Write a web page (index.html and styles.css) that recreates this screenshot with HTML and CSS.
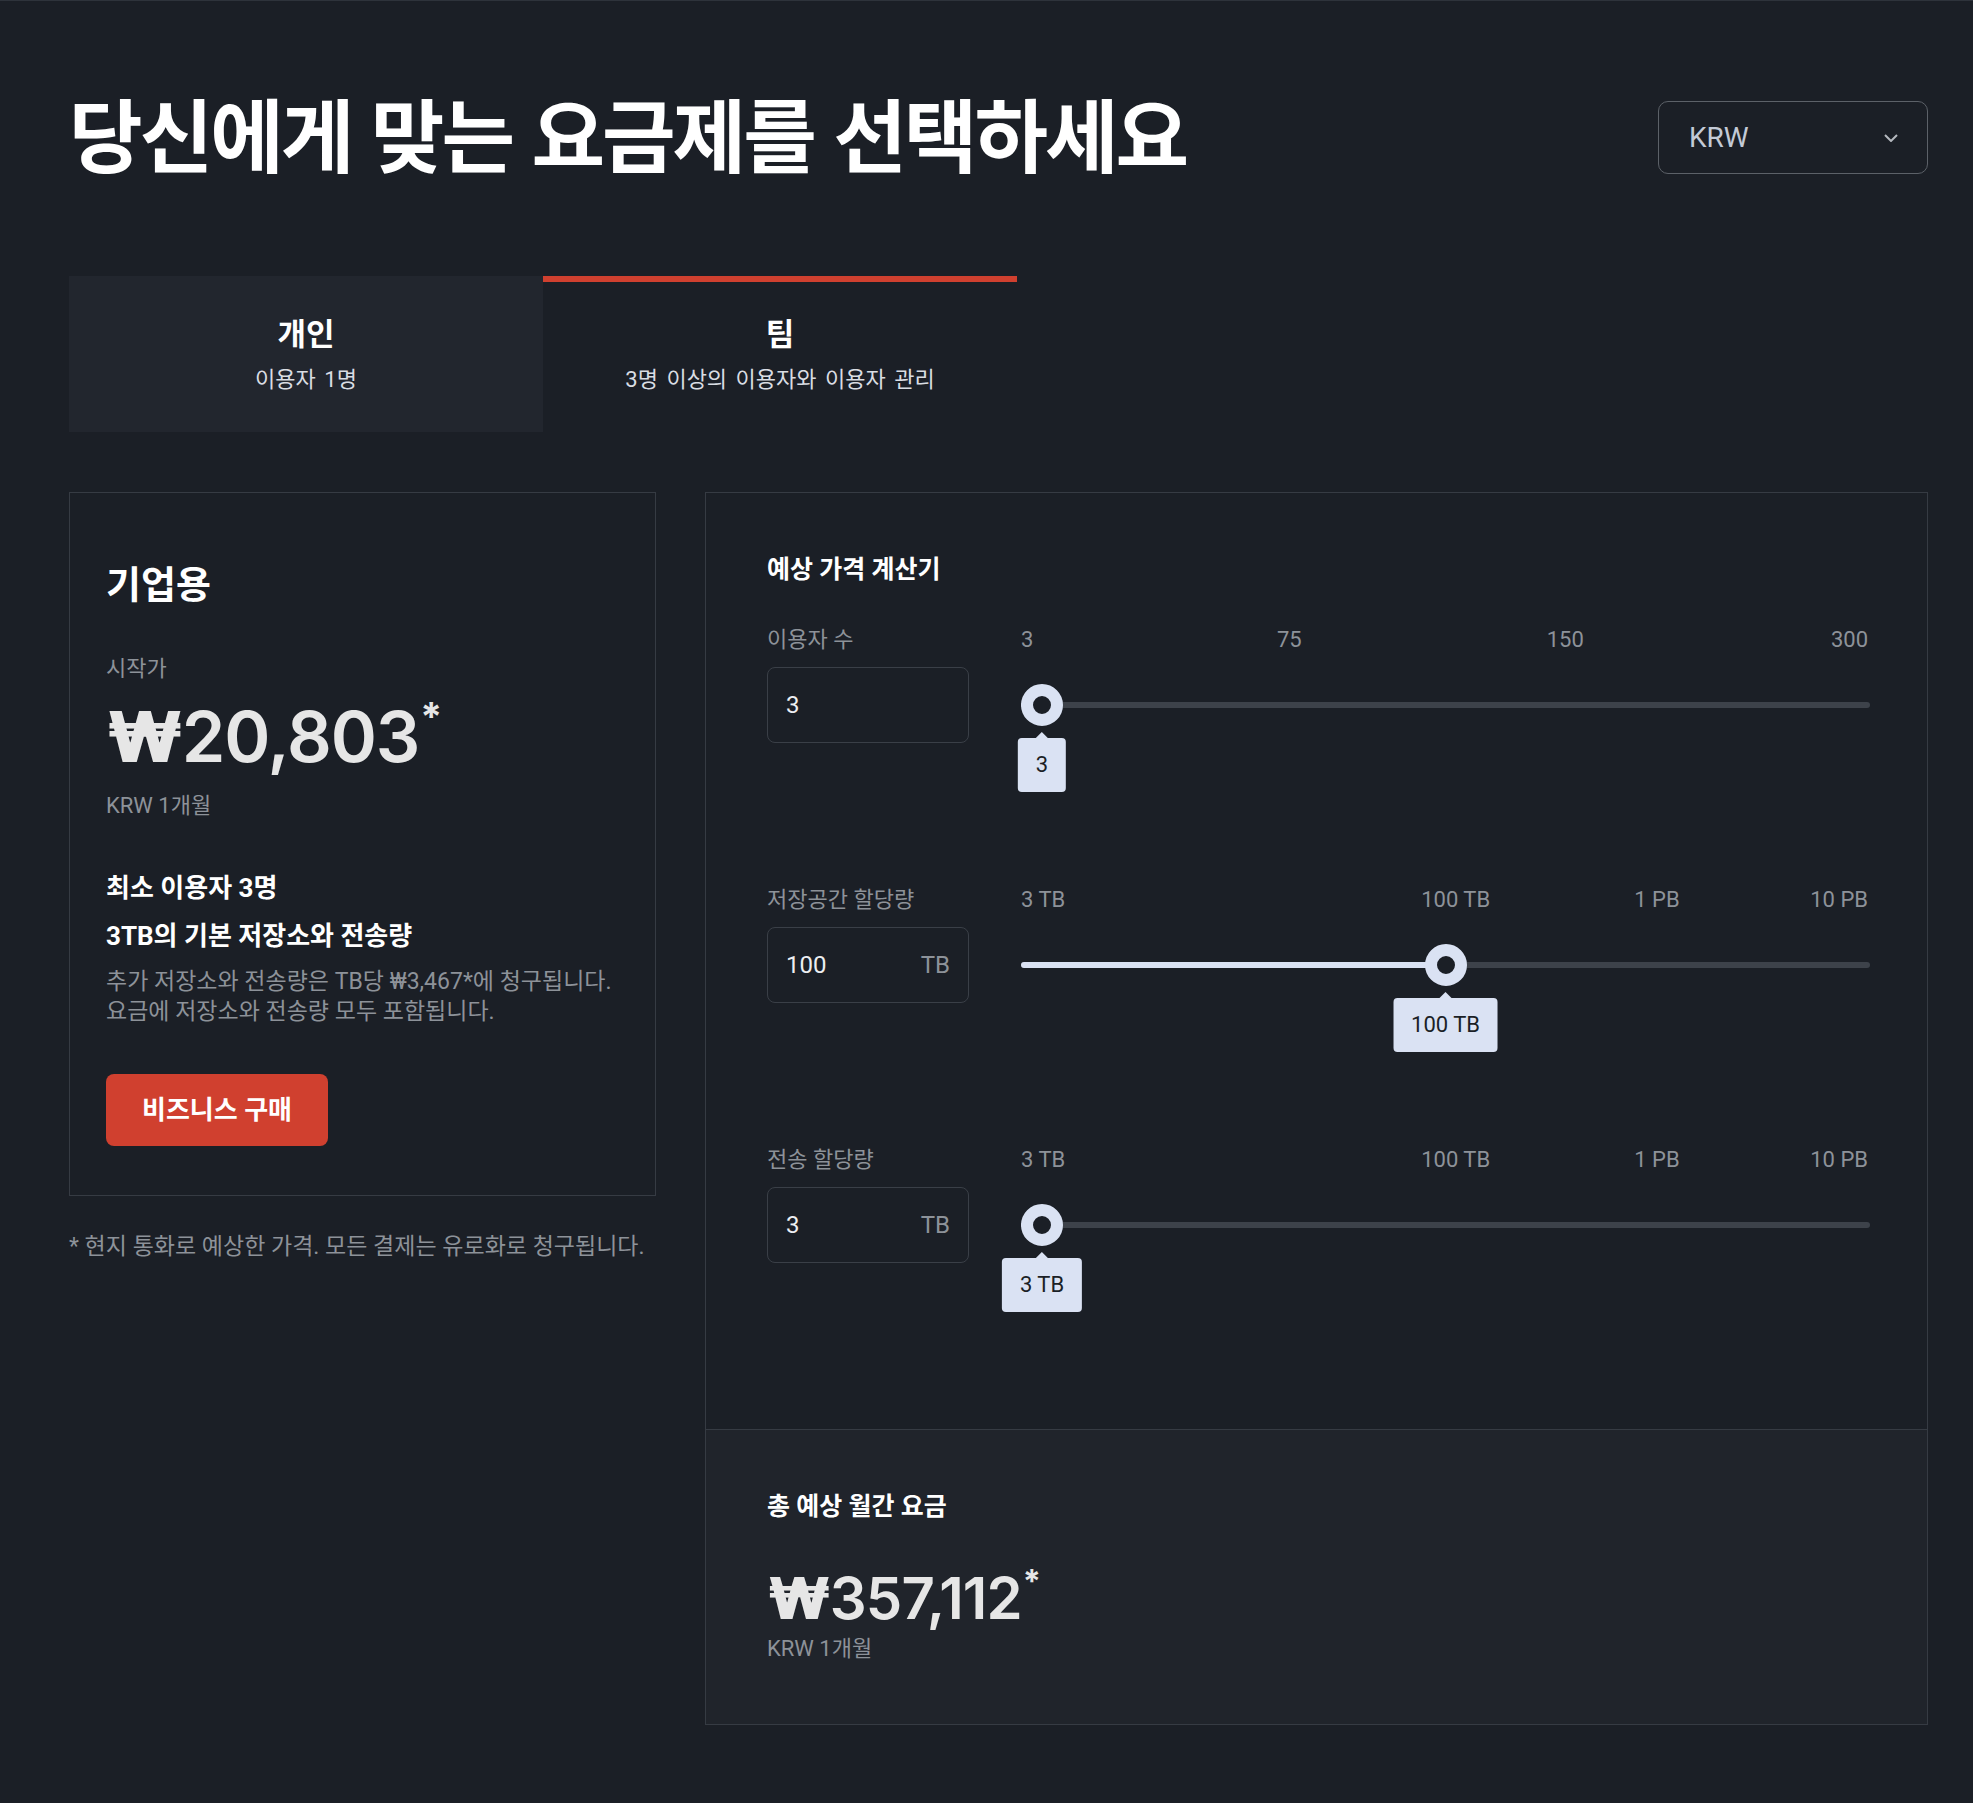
FILE: index.html
```html
<!DOCTYPE html>
<html lang="ko">
<head>
  <meta charset="UTF-8" />
  <meta name="viewport" content="width=device-width, initial-scale=1" />
  <title>요금제 선택</title>
  <link rel="stylesheet" href="styles.css">
</head>
<body>

<div class="page">
  <!-- 상단 제목과 통화 선택 -->
  <header class="top">
    <h1 class="title">당신에게 맞는 요금제를 선택하세요</h1>
    <div class="currency">
      <span>KRW</span>
      <svg width="14" height="8" viewBox="0 0 14 8"><path d="M1 1l6 6 6-6" fill="none" stroke="#b4b8be" stroke-width="2"/></svg>
    </div>
  </header>

  <!-- 탭 -->
  <nav class="tabs">
    <div class="tab">
      <div class="tab-name">개인</div>
      <div class="tab-sub">이용자 1명</div>
    </div>
    <div class="tab selected">
      <div class="tab-name">팀</div>
      <div class="tab-sub">3명 이상의 이용자와 이용자 관리</div>
    </div>
  </nav>

  <main class="plans">
    <div class="plan-col">
      <section class="card plan">
        <h2>기업용</h2>
        <div class="muted from">시작가</div>
        <div class="price big"><span class="won">₩</span>20,803<sup>*</sup></div>
        <div class="muted per">KRW 1개월</div>
        <div class="feature first">최소 이용자 3명</div>
        <div class="feature">3TB의 기본 저장소와 전송량</div>
        <p class="desc">추가 저장소와 전송량은 TB당 ₩3,467*에 청구됩니다.<br>요금에 저장소와 전송량 모두 포함됩니다.</p>
        <a class="buy" href="#">비즈니스 구매</a>
      </section>
      <p class="note">* 현지 통화로 예상한 가격. 모든 결제는 유로화로 청구됩니다.</p>
    </div>

    <section class="card calc">
      <div class="calc-body">
        <h3>예상 가격 계산기</h3>

        <div class="field">
          <div class="label">이용자 수</div>
          <div class="ticks">
            <span class="tick start">3</span>
            <span class="tick" style="left:31.6%">75</span>
            <span class="tick" style="left:64.1%">150</span>
            <span class="tick end">300</span>
          </div>
          <div class="input"><span class="val">3</span></div>
          <div class="slider" style="--pos:0">
            <div class="track"><div class="fill"></div></div>
            <div class="thumb"><span class="tip">3</span></div>
          </div>
        </div>

        <div class="field">
          <div class="label">저장공간 할당량</div>
          <div class="ticks">
            <span class="tick start">3 TB</span>
            <span class="tick" style="left:51.2%">100 TB</span>
            <span class="tick" style="left:74.9%">1 PB</span>
            <span class="tick end">10 PB</span>
          </div>
          <div class="input"><span class="val">100</span><span class="unit">TB</span></div>
          <div class="slider" style="--pos:0.5">
            <div class="track"><div class="fill"></div></div>
            <div class="thumb"><span class="tip">100 TB</span></div>
          </div>
        </div>

        <div class="field">
          <div class="label">전송 할당량</div>
          <div class="ticks">
            <span class="tick start">3 TB</span>
            <span class="tick" style="left:51.2%">100 TB</span>
            <span class="tick" style="left:74.9%">1 PB</span>
            <span class="tick end">10 PB</span>
          </div>
          <div class="input"><span class="val">3</span><span class="unit">TB</span></div>
          <div class="slider" style="--pos:0">
            <div class="track"><div class="fill"></div></div>
            <div class="thumb"><span class="tip">3 TB</span></div>
          </div>
        </div>
      </div>

      <div class="calc-total">
        <h3>총 예상 월간 요금</h3>
        <div class="price total"><span class="won">₩</span>357,112<sup>*</sup></div>
        <div class="muted per">KRW 1개월</div>
      </div>
    </section>
  </main>
</div>

</body>
</html>
```

FILE: styles.css
```css
* { margin: 0; padding: 0; box-sizing: border-box; }

body {
  background: #1b1f26;
  color: #ffffff;
  font-family: Roboto, "Noto Sans CJK KR", sans-serif;
  border-top: 1px solid #2e333b;
  min-height: 100vh;
}

.page {
  padding: 0 45px 80px 69px;
}

/* 상단 */
.top {
  display: flex;
  justify-content: space-between;
  align-items: center;
  margin-top: 100px;
  height: 73px;
}
.title {
  font-family: "Noto Sans CJK KR", sans-serif;
  font-size: 80px;
  font-weight: 700;
  line-height: 73px;
  letter-spacing: -3px;
  margin-bottom: 12px;
  color: #fff;
}
.currency {
  width: 270px;
  height: 73px;
  border: 1px solid #5c6168;
  border-radius: 10px;
  display: flex;
  align-items: center;
  justify-content: space-between;
  padding: 0 29px 0 30px;
  font-size: 28px;
  color: #c3cad6;
}

/* 탭 */
.tabs {
  display: flex;
  margin-top: 102px;
}
.tab {
  width: 474px;
  height: 156px;
  border-top: 6px solid transparent;
  background: #22262e;
  display: flex;
  flex-direction: column;
  justify-content: center;
  align-items: center;
  gap: 10px;
  padding-bottom: 4px;
}
.tab.selected {
  background: transparent;
  border-top-color: #d0402f;
}
.tab-name {
  font-size: 31px;
  font-weight: 700;
  line-height: 40px;
}
.tab-sub {
  font-size: 22px;
  line-height: 30px;
  word-spacing: 3px;
  color: #d9dde3;
}

/* 카드 */
.plans {
  display: grid;
  grid-template-columns: 587px 1fr;
  column-gap: 49px;
  margin-top: 60px;
  align-items: start;
}
.card {
  border: 1px solid #363b43;
}

.plan {
  padding: 68px 36px 49px;
}
.plan h2 {
  font-size: 38px;
  font-weight: 700;
  line-height: 48px;
}
.muted {
  color: #8d9299;
  font-size: 22px;
  line-height: 30px;
}
.from { margin-top: 45px; }

.price {
  font-family: Inter, Roboto, sans-serif;
  font-weight: 600;
  color: #e6e6e6;
  white-space: nowrap;
  letter-spacing: -0.015em;
}
.price .won {
  font-family: Inter, "DejaVu Sans", sans-serif;
  font-weight: 900;
  letter-spacing: -0.03em;
}
.price sup {
  font-size: 0.56em;
  font-weight: 700;
  vertical-align: top;
  position: relative;
  top: -0.5em;
  margin-left: 1px;
}
.price.big {
  font-size: 70px;
  line-height: 84px;
  margin-top: 11px;
}
.plan .per { margin-top: 12px; }

.feature {
  font-size: 26px;
  font-weight: 700;
  line-height: 34px;
  margin-top: 14px;
}
.feature.first { margin-top: 50px; }
.desc {
  margin-top: 14px;
  font-size: 23px;
  line-height: 30px;
  color: #8d9299;
}
.buy {
  display: inline-block;
  margin-top: 47px;
  width: 222px;
  height: 72px;
  line-height: 72px;
  text-align: center;
  background: #d0402f;
  border-radius: 8px;
  color: #fff;
  font-size: 26px;
  font-weight: 700;
  text-decoration: none;
}
.note {
  margin-top: 36px;
  font-size: 23px;
  line-height: 30px;
  color: #8d9299;
}

/* 계산기 */
.calc-body {
  padding: 60px 57px 166px 61px;
}
.calc h3 {
  font-size: 25px;
  font-weight: 700;
  line-height: 34px;
}
.field {
  display: grid;
  grid-template-columns: 202px 1fr;
  grid-template-rows: 28px 76px;
  column-gap: 52px;
  row-gap: 13px;
  margin-top: 143px;
}
.calc h3 + .field { margin-top: 39px; }

.label, .tick {
  font-size: 22px;
  line-height: 28px;
  color: #8d9299;
  white-space: nowrap;
}
.ticks {
  position: relative;
}
.tick {
  position: absolute;
  top: 0;
  transform: translateX(-50%);
}
.tick.start { left: 0; transform: none; }
.tick.end { right: 2px; transform: none; }

.input {
  border: 1px solid #3a3f47;
  border-radius: 8px;
  display: flex;
  align-items: center;
  justify-content: space-between;
  padding: 0 18px 0 18px;
  font-size: 24px;
}
.input .val { color: #eceef1; }
.input .unit { color: #8d9299; }

.slider {
  position: relative;
  display: flex;
  align-items: center;
}
.track {
  width: 100%;
  height: 6px;
  border-radius: 3px;
  background: #3d424a;
}
.fill {
  height: 6px;
  border-radius: 3px;
  background: #dae2f3;
  width: calc(21px + var(--pos) * (100% - 42px));
}
.thumb {
  position: absolute;
  top: 17px;
  left: calc(var(--pos) * (100% - 42px));
  width: 42px;
  height: 42px;
  border-radius: 50%;
  border: 12px solid #dae2f3;
  background: #1b1f26;
}
.tip {
  position: absolute;
  top: 42px;
  left: 50%;
  transform: translateX(-50%);
  height: 54px;
  line-height: 54px;
  padding: 0 18px;
  background: #dae2f3;
  border-radius: 4px;
  color: #1b1f26;
  font-size: 22px;
  white-space: nowrap;
}
.tip::before {
  content: "";
  position: absolute;
  top: -6px;
  left: 50%;
  margin-left: -6px;
  border-left: 6px solid transparent;
  border-right: 6px solid transparent;
  border-bottom: 6px solid #dae2f3;
}

.calc-total {
  border-top: 1px solid #363b43;
  background: #20242b;
  padding: 60px 61px 63px;
}
.price.total {
  font-size: 58px;
  line-height: 70px;
  margin-top: 39px;
}
.calc-total .per { margin-top: 4px; line-height: 24px; }
```
